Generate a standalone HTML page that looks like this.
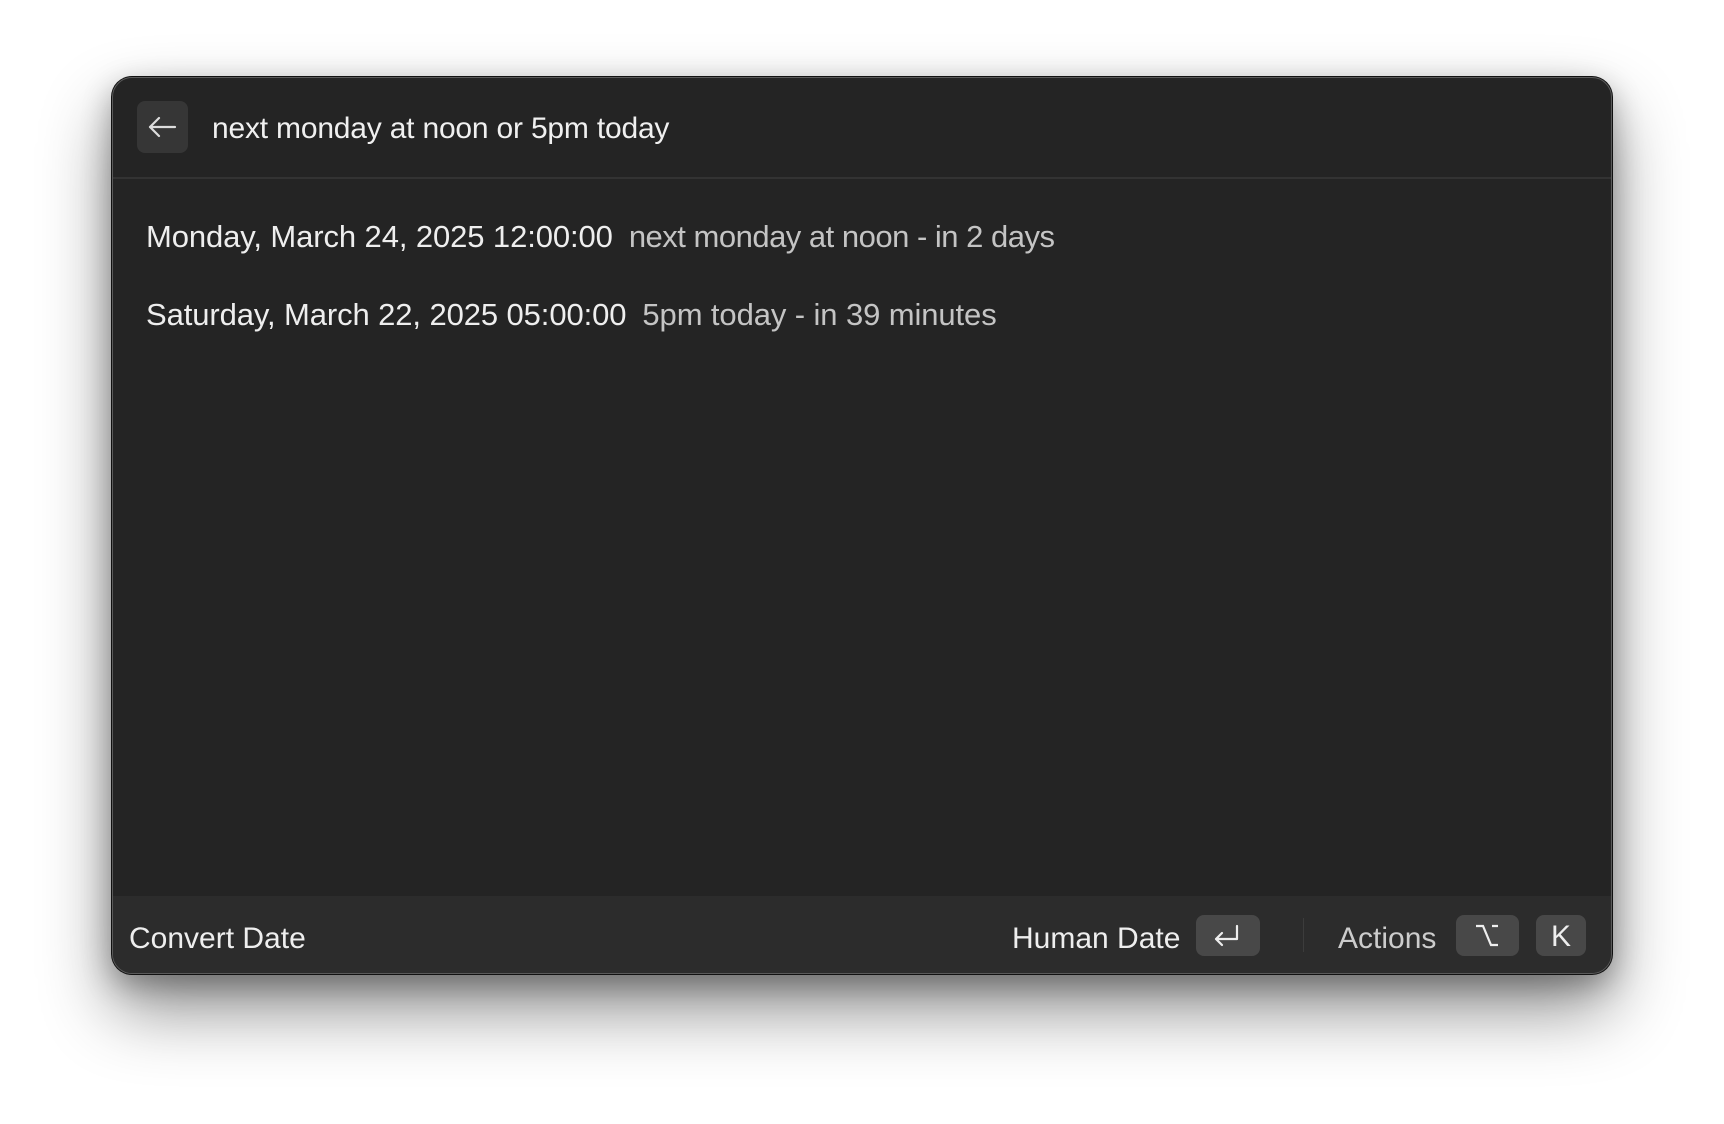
<!DOCTYPE html>
<html><head><style>
*{margin:0;padding:0;box-sizing:border-box}
body{width:1724px;height:1124px;background:#fff;font-family:"Liberation Sans",sans-serif;position:relative;overflow:hidden}
.win{position:absolute;left:112px;top:77px;width:1500px;height:897px;background:#242424;border-radius:20px;border:1px solid #5a5a5a;box-shadow:0 0 0 1px #111,0 35px 70px rgba(0,0,0,.45),0 10px 30px rgba(0,0,0,.3);overflow:hidden}
.hdr{position:absolute;left:0;top:0;right:0;height:101px;border-bottom:2px solid #333}
.back{position:absolute;left:24px;top:23px;width:51px;height:52px;background:#363636;border-radius:8px}
.q{position:absolute;left:99px;top:34px;font-size:30px;color:#f0f0f0;letter-spacing:-.2px}
.row{position:absolute;left:33px;font-size:31px;color:#eee;letter-spacing:-.1px;white-space:nowrap}
.row span{color:#c4c4c4;margin-left:16px}
.ftr{position:absolute;left:0;right:0;bottom:0;height:77px;background:#2c2c2c}
.ft{position:absolute;top:26px;font-size:30px;letter-spacing:0;color:#eee}
.key{position:absolute;top:19px;height:41px;background:#484848;border-radius:8px;color:#eee;font-size:30px;text-align:center;line-height:43px}
</style></head><body>
<div class="win">
 <div class="hdr">
  <div class="back"><svg width="51" height="52" viewBox="0 0 51 52"><path d="M13 26H38M13 26L22 17M13 26L22 35" stroke="#ddd" stroke-width="2.2" fill="none" stroke-linecap="round" stroke-linejoin="round"/></svg></div>
  <div class="q">next monday at noon or 5pm today</div>
 </div>
 <div class="row" style="top:141px">Monday, March 24, 2025 12:00:00<span style="letter-spacing:-.5px">next monday at noon - in 2 days</span></div>
 <div class="row" style="top:219px">Saturday, March 22, 2025 05:00:00<span>5pm today - in 39 minutes</span></div>
 <div class="ftr">
  <div class="ft" style="left:16px">Convert Date</div>
  <div class="ft" style="left:899px">Human Date</div>
  <div class="key" style="left:1083px;width:64px"><svg width="64" height="41" viewBox="0 0 64 41"><path d="M41 11V24H20M20 24L26 18M20 24L26 30" stroke="#eee" stroke-width="2.2" fill="none" stroke-linecap="round" stroke-linejoin="round"/></svg></div>
  <div style="position:absolute;left:1190px;top:22px;width:1px;height:34px;background:#3c3c3c"></div>
  <div class="ft" style="left:1225px;color:#ccc">Actions</div>
  <div class="key" style="left:1343px;width:63px"><svg width="63" height="41" viewBox="0 0 63 41"><path d="M20 11H27L35 30H42M36 11H42" stroke="#eee" stroke-width="2.2" fill="none"/></svg></div>
  <div class="key" style="left:1423px;width:50px">K</div>
 </div>
</div>
</body></html>
